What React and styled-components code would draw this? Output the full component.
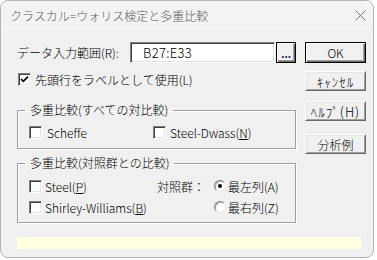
import React from "react";
import styled, { createGlobalStyle } from "styled-components";

const GlobalStyle = createGlobalStyle`
  html, body {
    margin: 0;
    padding: 0;
    background: #ffffff;
  }
  body {
    font-family: "Noto Sans CJK JP", "Noto Sans", sans-serif;
    font-size: 12px;
    font-weight: 300;
    color: #000;
  }
`;

const Window = styled.div`
  width: 374px;
  height: 258px;
  box-sizing: border-box;
  border: 1px solid #b4b4b4;
  border-radius: 8px;
  background: #f0f0f0;
  overflow: hidden;
  display: flex;
  flex-direction: column;
`;

const TitleBar = styled.div`
  height: 29px;
  flex: none;
  display: flex;
  align-items: center;
  justify-content: space-between;
  padding: 0 6px 0 9px;
  background: #f3f3f3;
  color: #5c5c5c;
  font-size: 12px;
`;

const CloseIcon = styled.svg`
  width: 11px;
  height: 11px;
  margin-right: 1px;
`;

const Main = styled.div`
  display: flex;
  gap: 9px;
  padding: 12px 7px 0 16px;
`;

const LeftCol = styled.div`
  width: 279px;
  display: flex;
  flex-direction: column;
`;

const RightCol = styled.div`
  width: 61px;
  display: flex;
  flex-direction: column;
`;

const RangeRow = styled.div`
  display: flex;
  align-items: center;
  height: 21px;
`;

const RangeLabel = styled.span`
  width: 113px;
  white-space: nowrap;
`;

const RangeInput = styled.div`
  width: 145px;
  height: 21px;
  box-sizing: border-box;
  background: #fff;
  border: 1px solid;
  border-color: #808080 #ffffff #ffffff #808080;
  box-shadow: inset 1px 1px 0 #404040, inset -1px -1px 0 #e3e3e3;
  display: flex;
  align-items: center;
  padding-left: 12px;
  font-size: 13px;
  letter-spacing: 0.3px;
`;

const ClassicButton = styled.button`
  box-sizing: border-box;
  height: ${(p) => p.$h || 20}px;
  margin-top: ${(p) => p.$mt || 0}px;
  padding: 0;
  font-family: inherit;
  font-size: ${(p) => (p.$hankaku ? 13 : 12)}px;
  letter-spacing: ${(p) => (p.$hankaku ? 1 : 0)}px;
  font-weight: 300;
  color: #000;
  background: #f0f0f0;
  border: 1px solid;
  border-color: ${(p) =>
    p.$default ? "#000 #000 #000 #000" : "#ffffff #696969 #696969 #ffffff"};
  box-shadow: ${(p) =>
    p.$default
      ? "inset 1px 1px 0 #ffffff, inset -1px -1px 0 #696969, inset -2px -2px 0 #a0a0a0"
      : "inset 1px 1px 0 #e3e3e3, inset -1px -1px 0 #a0a0a0"};
  display: flex;
  align-items: center;
  justify-content: center;
`;

const BrowseButton = styled(ClassicButton)`
  width: 20px;
  margin-left: 1px;
  align-items: flex-end;
  padding-bottom: 4px;
  font-size: 10px;
  font-weight: bold;
  line-height: 8px;
  color: #16164a;
`;

const DialogButton = styled(ClassicButton)`
  width: 61px;
`;

const CheckRow = styled.label`
  display: flex;
  align-items: center;
  height: 16px;
  gap: ${(p) => p.$gap || 4}px;
  margin-top: ${(p) => p.$mt || 0}px;
  padding-left: ${(p) => p.$pl || 0}px;
  white-space: nowrap;
`;

const Box = styled.span`
  width: 13px;
  height: 13px;
  box-sizing: border-box;
  flex: none;
  background: #fff;
  border: 1px solid;
  border-color: #808080 #ffffff #ffffff #808080;
  box-shadow: inset 1px 1px 0 #404040, inset -1px -1px 0 #e3e3e3;
  display: flex;
  align-items: center;
  justify-content: center;
`;

const Radio = styled.span`
  width: 12px;
  height: 12px;
  box-sizing: border-box;
  flex: none;
  border-radius: 50%;
  background: #fff;
  border: 1px solid;
  border-color: #808080 #e8e8e8 #e8e8e8 #808080;
  box-shadow: inset 1px 1px 0 #b0b0b0;
  display: flex;
  align-items: center;
  justify-content: center;

  &::after {
    content: "";
    width: 4px;
    height: 4px;
    border-radius: 50%;
    background: ${(p) => (p.$on ? "#000" : "transparent")};
  }
`;

const Group = styled.fieldset`
  margin: ${(p) => p.$mt || 0}px 0 0 0;
  padding: ${(p) => p.$pt}px 8px ${(p) => p.$pb}px 11px;
  border: 1px solid #a0a0a0;
  box-shadow: inset 1px 1px 0 #ffffff, 1px 1px 0 #ffffff;
  min-inline-size: 0;
`;

const Legend = styled.legend`
  margin-left: -4px;
  padding: 0 5px;
  line-height: 16px;
  height: 16px;
`;

const SplitRow = styled.div`
  display: flex;
  gap: 0;
`;

const Slot = styled.div`
  width: ${(p) => p.$w}px;
`;

const CompareGrid = styled.div`
  display: grid;
  grid-template-columns: 128px 57px auto;
  grid-auto-rows: 16px;
  row-gap: 5px;
  align-items: center;
`;

const PlainText = styled.span`
  white-space: nowrap;
`;

const Status = styled.div`
  margin: 14px 0 0 16px;
  width: 344px;
  height: 12px;
  background: #ffffe1;
`;

const Check = () => (
  <svg width="9" height="9" viewBox="0 0 9 9">
    <polyline points="1,4 3.3,6.4 8,1.6" fill="none" stroke="#000" strokeWidth="1.7" />
  </svg>
);

export default function App() {
  return (
    <>
      <GlobalStyle />
      <Window>
        <TitleBar>
          <span>クラスカル=ウォリス検定と多重比較</span>
          <CloseIcon viewBox="0 0 11 11">
            <path d="M0.5 0.5 L10.5 10.5 M10.5 0.5 L0.5 10.5" stroke="#7a7a7a" strokeWidth="1" />
          </CloseIcon>
        </TitleBar>
        <Main>
          <LeftCol>
            <RangeRow>
              <RangeLabel>データ入力範囲(R):</RangeLabel>
              <RangeInput>B27:E33</RangeInput>
              <BrowseButton $h={21} $default>...</BrowseButton>
            </RangeRow>
            <CheckRow $mt={8} $pl={1}>
              <Box>
                <Check />
              </Box>
              先頭行をラベルとして使用(L)
            </CheckRow>

            <Group $mt={15} $pt={6} $pb={8}>
              <Legend>多重比較(すべての対比較)</Legend>
              <SplitRow>
                <Slot $w={124}>
                  <CheckRow $gap={5}>
                    <Box />
                    Scheffe
                  </CheckRow>
                </Slot>
                <Slot $w={130}>
                  <CheckRow $gap={4}>
                    <Box />
                    <span>
                      Steel-Dwass(<u>N</u>)
                    </span>
                  </CheckRow>
                </Slot>
              </SplitRow>
            </Group>

            <Group $mt={6} $pt={7} $pb={7}>
              <Legend>多重比較(対照群との比較)</Legend>
              <CompareGrid>
                <CheckRow $gap={3}>
                  <Box />
                  <span>
                    Steel(<u>P</u>)
                  </span>
                </CheckRow>
                <PlainText>対照群：</PlainText>
                <CheckRow $gap={2}>
                  <Radio $on />
                  最左列(A)
                </CheckRow>
                <CheckRow $gap={3}>
                  <Box />
                  <span>
                    Shirley-Williams(<u>B</u>)
                  </span>
                </CheckRow>
                <span />
                <CheckRow $gap={2}>
                  <Radio />
                  最右列(Z)
                </CheckRow>
              </CompareGrid>
            </Group>
          </LeftCol>
          <RightCol>
            <DialogButton $h={21} $default>
              OK
            </DialogButton>
            <DialogButton $mt={8} $hankaku>ｷｬﾝｾﾙ</DialogButton>
            <DialogButton $mt={10} $hankaku>ﾍﾙﾌﾟ(H)</DialogButton>
            <DialogButton $mt={13}>分析例</DialogButton>
          </RightCol>
        </Main>
        <Status />
      </Window>
    </>
  );
}
